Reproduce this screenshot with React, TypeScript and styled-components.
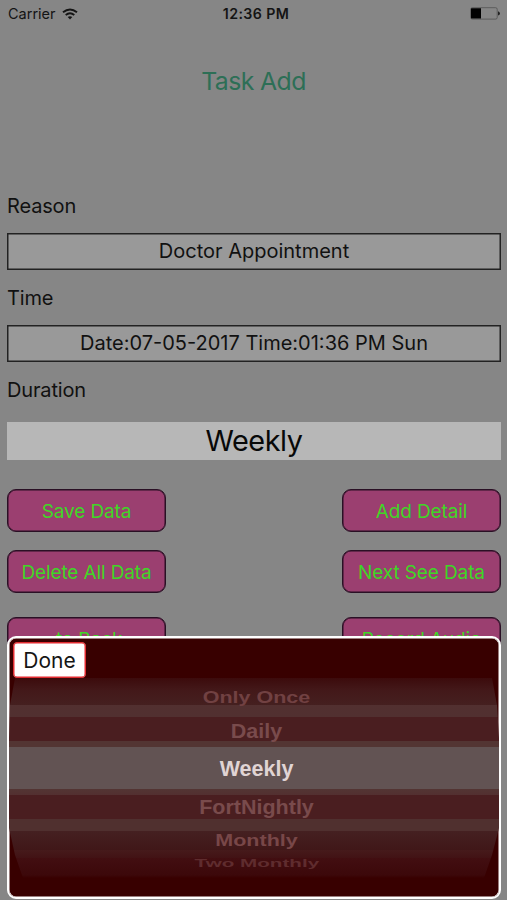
import React from "react";
import styled, { createGlobalStyle } from "styled-components";

const Global = createGlobalStyle`
  *{box-sizing:border-box}
  html,body{margin:0;padding:0;background:#868686;overflow:hidden}
`;

const Screen = styled.main`
  position: relative;
  width: 507px;
  height: 900px;
  overflow: hidden;
  background: #868686;
  color: #111;
  font-family: Inter, "Liberation Sans", sans-serif;
  display: flex;
  flex-direction: column;
`;

const StatusBar = styled.header`
  height: 27px;
  padding: 0 7px 0 8px;
  display: grid;
  grid-template-columns: 1fr auto 1fr;
  align-items: center;
  color: #141414;
`;

const Carrier = styled.div`
  display: flex;
  align-items: center;
  gap: 6px;
  font-size: 14.5px;
`;

const Clock = styled.div`
  font-size: 14.2px;
  font-weight: 600;
  letter-spacing: 0.4px;
  padding-left: 4px;
`;

const BatterySlot = styled.div`
  display: flex;
  justify-content: flex-end;
`;

const Title = styled.h1`
  margin: 0;
  height: 108px;
  line-height: 108px;
  font-size: 24.8px;
  font-weight: 400;
  text-align: center;
  color: #2d6f56;
  letter-spacing: -0.6px;
`;

const Form = styled.section`
  display: flex;
  flex-direction: column;
  padding: 52px 6px 0 7px;
`;

const Label = styled.label`
  height: 38px;
  line-height: 38px;
  margin-bottom: 8px;
  font-size: 20px;
  letter-spacing: -0.15px;
`;

const Field = styled.div`
  height: 37px;
  margin-bottom: 9px;
  border: 1px solid #222;
  box-shadow: inset 0 0 0 0.5px #222;
  background: #999;
  font-size: 20px;
  line-height: 35px;
  text-align: center;
`;

const Duration = styled.div`
  height: 38px;
  margin-top: 5px;
  background: #b7b7b7;
  color: #080808;
  font-size: 28.8px;
  letter-spacing: -0.45px;
  line-height: 37px;
  text-align: center;
`;

const Actions = styled.section`
  display: flex;
  flex-direction: column;
  padding: 29px 6px 0 7px;
`;

const ActionRow = styled.div<{ $gap: number }>`
  display: flex;
  justify-content: space-between;
  margin-bottom: ${(p) => p.$gap}px;
`;

const Action = styled.button`
  width: 159px;
  height: 43px;
  padding: 3px 0 0;
  border: 1px solid #2a1025;
  box-shadow: inset 0 0 0 0.5px #2a1025;
  border-radius: 9px;
  background: #9b3f70;
  color: #3fd726;
  font-family: inherit;
  font-size: 19px;
  letter-spacing: -0.12px;
  line-height: 38px;
  white-space: pre;
`;

const Panel = styled.section`
  position: absolute;
  left: 7px;
  top: 636px;
  width: 494px;
  height: 263px;
  border: 2px solid #fff;
  box-shadow: inset 0 0 0 0.5px #fff;
  border-radius: 9px;
  background: #380000;
  overflow: hidden;
  display: flex;
  flex-direction: column;
`;

const Toolbar = styled.div`
  flex: none;
  height: 40px;
  padding: 4px 0 0 4px;
`;

const Done = styled.button`
  display: block;
  width: 73px;
  height: 36px;
  padding: 0;
  border: 1px solid #e22b30;
  box-shadow: inset 0 0 0 0.5px #e22b30;
  border-radius: 4px;
  background: #fff;
  color: #151515;
  font-family: inherit;
  font-size: 21px;
  line-height: 35px;
`;

const Wheel = styled.div`
  flex: none;
  height: 200px;
  padding: 2px 0 0 5px;
  display: flex;
  flex-direction: column;
  align-items: center;
  font-family: "Liberation Sans", Arial, sans-serif;
  font-weight: 700;
  background: linear-gradient(
    #3c0b0c 0, #431819 12px, #452020 27px,
    #523030 27px, #513030 39px,
    #4a1e20 39px, #4a1e20 63px,
    #533533 63px, #533533 69px,
    #625353 69px, #625353 111px,
    #533533 111px, #533030 117px,
    #4a1e20 117px, #4a1e20 141px,
    #50302f 141px, #50302f 153px,
    #452021 153px, #401718 172px,
    #461a1b 172px, #421214 180px,
    #420e11 180px, #3c080a 197px, #380000 200px
  );
  clip-path: polygon(6px 0, 483px 0, 488px 27px, 100% 60px, 100% 150px, 483px 177px, 475px 100%, 14px 100%, 6px 177px, 0 150px, 0 60px, 1px 27px);
`;

const Option = styled.div<{ $h: number; $color: string }>`
  flex: none;
  height: ${(p) => p.$h}px;
  display: flex;
  align-items: center;
  color: ${(p) => p.$color};
  font-size: 21.5px;
  line-height: 24px;
`;

const Curved = styled.span<{ $y: number; $x: number }>`
  display: block;
  transform: scale(${(p) => p.$x}, ${(p) => p.$y});
  white-space: nowrap;
`;

const WifiIcon = () => (
  <svg width="16" height="12" viewBox="0 0 16 12" fill="none" stroke="#141414" strokeWidth="1.9">
    <path d="M1 4.3Q8-1.5 15 4.3" />
    <path d="M3.7 7.1Q8 3.6 12.3 7.1" />
    <path d="M5.7 9.1Q8 7.2 10.3 9.1L8 11.6Z" fill="#141414" stroke="none" />
  </svg>
);

const BatteryIcon = () => (
  <svg width="30" height="13" viewBox="0 0 30 13">
    <rect x="0.7" y="0.7" width="26.5" height="11.4" rx="1.6" fill="none" stroke="#505050" strokeWidth="0.8" />
    <path d="M1.6 1.3H11V11.5H1.6Q1 11.5 1 10.8V2Q1 1.3 1.6 1.3Z" fill="#000" />
    <path d="M28 4.3Q30 5 30 6.4T28 8.5Z" fill="#222" />
  </svg>
);

const options = [
  { text: "Only Once", h: 36, y: 0.77, x: 1, color: "#714142" },
  { text: "Daily", h: 30, y: 0.93, x: 1, color: "#794b4c" },
  { text: "Weekly", h: 46, y: 1, x: 1, color: "#e0d4d4" },
  { text: "FortNightly", h: 30, y: 0.93, x: 1, color: "#794b4c" },
  { text: "Monthly", h: 38, y: 0.75, x: 1, color: "#784748" },
  { text: "Two Monthly", h: 8, y: 0.47, x: 0.96, color: "#5f2c2e" },
];

export default function App() {
  return (
    <Screen>
      <Global />
      <StatusBar>
        <Carrier>
          <span>Carrier</span>
          <WifiIcon />
        </Carrier>
        <Clock>12:36 PM</Clock>
        <BatterySlot>
          <BatteryIcon />
        </BatterySlot>
      </StatusBar>
      <Title>Task Add</Title>
      <Form>
        <Label>Reason</Label>
        <Field>Doctor Appointment</Field>
        <Label>Time</Label>
        <Field>Date:07-05-2017 Time:01:36 PM Sun</Field>
        <Label>Duration</Label>
        <Duration>Weekly</Duration>
      </Form>
      <Actions>
        <ActionRow $gap={18}>
          <Action>Save Data</Action>
          <Action>Add Detail</Action>
        </ActionRow>
        <ActionRow $gap={24}>
          <Action>Delete All Data</Action>
          <Action>Next See Data</Action>
        </ActionRow>
        <ActionRow $gap={0}>
          <Action> to Back</Action>
          <Action>Record Audio</Action>
        </ActionRow>
      </Actions>
      <Panel>
        <Toolbar>
          <Done>Done</Done>
        </Toolbar>
        <Wheel>
          {options.map((o) => (
            <Option key={o.text} $h={o.h} $color={o.color}>
              <Curved $y={o.y} $x={o.x}>{o.text}</Curved>
            </Option>
          ))}
        </Wheel>
      </Panel>
    </Screen>
  );
}
